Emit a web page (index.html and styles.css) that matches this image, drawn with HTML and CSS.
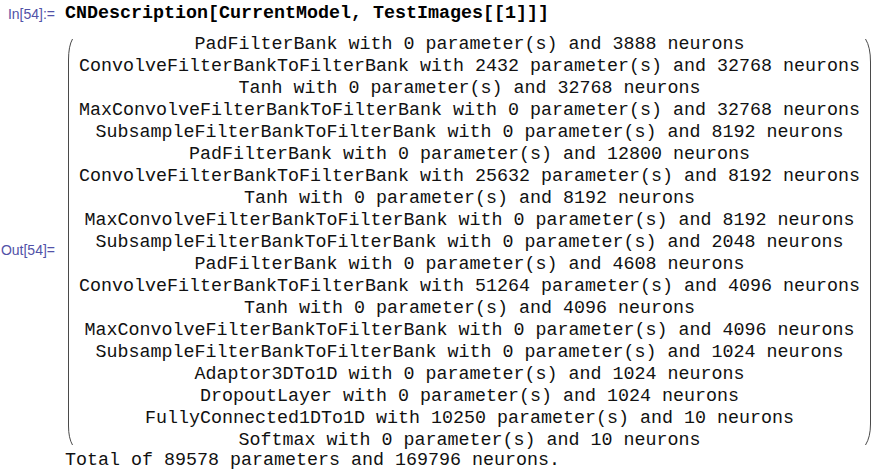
FILE: index.html
```html
<!DOCTYPE html>
<html>
<head>
<meta charset="utf-8">
<link rel="stylesheet" href="styles.css">
</head>
<body>
<div class="nb">
  <div class="cell cell-in">
    <div class="label label-in">In[54]:=</div>
    <div class="input">CNDescription[CurrentModel, TestImages[[1]]]</div>
  </div>
  <div class="cell cell-out">
    <div class="label label-out">Out[54]=</div>
    <div class="output">
      <div class="matrix">
        <svg class="paren" width="14" height="418" viewBox="0 0 14 418"><path d="M7.5 5 Q3.5 12 3.5 26 L3.5 392 Q3.5 404 7.5 411" /></svg>
        <div class="rows">
          <div>PadFilterBank with 0 parameter(s) and 3888 neurons</div>
          <div>ConvolveFilterBankToFilterBank with 2432 parameter(s) and 32768 neurons</div>
          <div>Tanh with 0 parameter(s) and 32768 neurons</div>
          <div>MaxConvolveFilterBankToFilterBank with 0 parameter(s) and 32768 neurons</div>
          <div>SubsampleFilterBankToFilterBank with 0 parameter(s) and 8192 neurons</div>
          <div>PadFilterBank with 0 parameter(s) and 12800 neurons</div>
          <div>ConvolveFilterBankToFilterBank with 25632 parameter(s) and 8192 neurons</div>
          <div>Tanh with 0 parameter(s) and 8192 neurons</div>
          <div>MaxConvolveFilterBankToFilterBank with 0 parameter(s) and 8192 neurons</div>
          <div>SubsampleFilterBankToFilterBank with 0 parameter(s) and 2048 neurons</div>
          <div>PadFilterBank with 0 parameter(s) and 4608 neurons</div>
          <div>ConvolveFilterBankToFilterBank with 51264 parameter(s) and 4096 neurons</div>
          <div>Tanh with 0 parameter(s) and 4096 neurons</div>
          <div>MaxConvolveFilterBankToFilterBank with 0 parameter(s) and 4096 neurons</div>
          <div>SubsampleFilterBankToFilterBank with 0 parameter(s) and 1024 neurons</div>
          <div>Adaptor3DTo1D with 0 parameter(s) and 1024 neurons</div>
          <div>DropoutLayer with 0 parameter(s) and 1024 neurons</div>
          <div>FullyConnected1DTo1D with 10250 parameter(s) and 10 neurons</div>
          <div>Softmax with 0 parameter(s) and 10 neurons</div>
        </div>
        <svg class="paren" width="14" height="418" viewBox="0 0 14 418"><path d="M5.5 5 Q10.5 13 10.5 28 L10.5 390 Q10.5 403 5.5 411" /></svg>
      </div>
      <div class="total">Total of 89578 parameters and 169796 neurons.</div>
    </div>
  </div>
</div>
</body>
</html>
```

FILE: styles.css
```css
html, body {
  margin: 0;
  padding: 0;
  background: #ffffff;
}

.nb {
  padding-top: 3px;
  font-family: "Courier New", "Liberation Mono", monospace;
  font-size: 18.33px;
  color: #111111;
}

.cell {
  display: grid;
  grid-template-columns: 65px 1fr;
}

.cell-out {
  margin-top: 9px;
}

.label {
  font-family: "Liberation Sans", Arial, sans-serif;
  font-size: 14px;
  color: #5252a8;
  text-align: right;
  padding-right: 10px;
  white-space: nowrap;
}

.label-in {
  line-height: 22px;
}

.label-out {
  align-self: center;
  padding-bottom: 6px;
}

.input {
  font-weight: bold;
  line-height: 22px;
  white-space: pre;
  color: #000000;
}

.output {
  display: flex;
  flex-direction: column;
  align-items: flex-start;
}

.matrix {
  display: flex;
  align-items: flex-start;
}

.paren {
  display: block;
  flex: none;
}

.paren path {
  fill: none;
  stroke: #4a4a4a;
  stroke-width: 1;
}

.rows {
  display: flex;
  flex-direction: column;
  align-items: center;
  line-height: 22px;
  white-space: pre;
}

.total {
  line-height: 22px;
  white-space: pre;
  margin-top: -2px;
}
```
